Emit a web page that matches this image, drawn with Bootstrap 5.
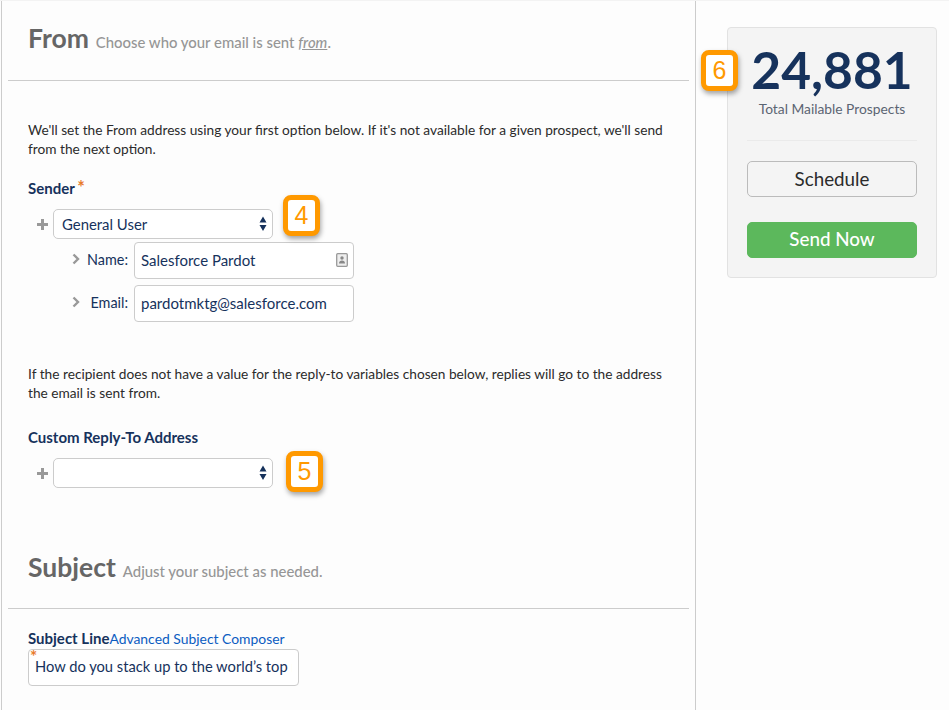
<!DOCTYPE html>
<html lang="en"><head><meta charset="utf-8"><title>From</title>
<link href="https://cdn.jsdelivr.net/npm/bootstrap@5.3.0/dist/css/bootstrap.min.css" rel="stylesheet">
<style>
html,body{height:710px;overflow:hidden}
body{background:#fdfdfd;font-family:Lato,"Liberation Sans",sans-serif;font-size:13.5px;color:#16325c}
.shell{height:710px;border-top:1px solid #f3f3f3;position:relative}
.mainpane{width:695px;height:709px;margin-left:1px;border-left:1px solid #ccc;border-right:1px solid #ccc;padding:0 6px;flex:none;overflow:hidden}
.sidepane{flex:1;padding:26px 11px 0 31px}
.sect-head{margin:0;padding:0 0 0 20px;font-size:14.9px;color:#969696;display:flex;align-items:baseline;gap:7px}
.sect-head b{font-size:26.5px;color:#666;font-weight:700;line-height:32px}
.sect-head u{font-style:italic}
.from-head{padding-top:21px;height:79px}
.subj-head{margin-top:60px;height:60px;padding-top:3px}
.rule{border-top:1px solid #ccc;width:681px}
.copy{margin:0 0 0 20px;width:645px;color:#2b2b2b;line-height:19px;font-size:13.7px}
.copy-a{margin-top:39px}
.copy-b{margin-top:42px}
.lbl{font-weight:700;color:#16325c;font-size:15px;line-height:17px;margin-left:20px}
.lbl i{color:#e87b2b;font-style:normal;font-size:18px;line-height:0;margin-left:-1px}
.lbl-a{margin-top:22px}
.lbl-b{margin-top:27px}
.plus{width:25px;text-align:right;padding-right:5px;flex:none;line-height:0}
.pick{width:220px;height:30px;padding:0 24px 0 8px;border:1px solid #ccc;border-radius:5px;font-size:14.9px;color:#16325c;background-color:#fff;background-size:12px 20px;background-position:right 3px center;background-image:url("data:image/svg+xml,%3Csvg xmlns='http://www.w3.org/2000/svg' viewBox='0 0 12 20'%3E%3Cpath fill='%2316325c' d='M6 2.500 9.500 8.500h-7zM2.500 11h7L6 17z'/%3E%3C/svg%3E")}
.rowline{margin-left:20px;margin-top:12px;display:flex;align-items:center}
.subrow{margin-left:64px;display:flex;align-items:center;height:37px}
.sr-a{margin-top:3px}
.sr-b{margin-top:6px}
.subrow .tag{width:56px;display:flex;align-items:center;justify-content:space-between;font-size:14.4px;color:#16325c;flex:none;margin-right:6px;padding-bottom:2px}
.fld{width:220px;height:37px;padding:0 6px 2px;border:1px solid #ccc;border-radius:4px;font-size:15px;color:#16325c;background-color:#fff}
.fldwrap{position:relative}
.fldwrap svg{position:absolute;right:6px;top:11px}
.panel-box{background:#f4f4f4;border:1px solid #e2e2e2;border-radius:4px;height:251px;width:210px;padding:13px 19px 0;text-align:center}
.bignum{font-size:51.500px;font-weight:700;color:#16325c;line-height:56px;letter-spacing:0}
.numlbl{color:#5b6472;font-size:13.800px;line-height:20px;margin-top:2px}
.panel-rule{border-top:1px solid #eaeaea;margin:21px 0 20px}
.btn-sched,.btn-send{display:block;width:170px;font-size:18.800px;border-radius:5px}
.btn-sched{height:36px;padding:0;background:#f4f4f4;border:1px solid #bbb;color:#2b2b2b;margin-bottom:25px}
.btn-send{height:36px;padding:0 0 1px;background:#5cb85c;border:1px solid #5cb85c;color:#fff;font-weight:500}
.note{position:absolute;width:37px;height:41px;border:5px solid #f90;border-radius:8px;background:#fff;color:#f90;font-size:25px;font-family:"Liberation Sans",sans-serif;display:flex;align-items:center;justify-content:center;box-shadow:1px 3px 5px rgba(0,0,0,.35)}
.n4{left:283px;top:194px}.n5{left:286px;top:450px}.n6{left:701px;top:49px}
.reqmark{position:absolute;left:2px;top:1px;color:#e87b2b;font-weight:700;font-size:17px;line-height:14px}
.subj-field{margin-left:20px;margin-top:2px;position:relative;width:271px}
.subj-field .fld{width:271px;padding:0 6px 3px;overflow:hidden;font-size:14.7px}
.sublabel{display:flex;margin:21px 0 0 20px;line-height:17px;font-size:15px}
.sublabel b{color:#16325c}
.sublabel a{color:#0b5cc1;text-decoration:none;font-size:13.9px}
</style></head>
<body>
<div class="shell d-flex">
  <div class="mainpane">
    <h2 class="sect-head from-head"><b>From</b><span>Choose who your email is sent <u>from</u>.</span></h2>
    <div class="rule"></div>
    <p class="copy copy-a">We'll set the From address using your first option below. If it's not available for a given prospect, we'll send from the next option.</p>
    <div class="lbl lbl-a">Sender <i>*</i></div>
    <div class="rowline">
      <span class="plus"><svg width="11" height="11" viewBox="0 0 11 11"><path fill="#999" d="M4 0h3v4h4v3H7v4H4V7H0V4h4z"/></svg></span>
      <select class="form-select pick"><option>General User</option></select>
    </div>
    <div class="subrow sr-a">
      <span class="tag"><svg width="8" height="12" viewBox="0 0 8 12"><path fill="none" stroke="#999" stroke-width="2.400" d="M1.500 1.500 6 6l-4.500 4.500"/></svg>Name:</span>
      <div class="fldwrap"><input class="form-control fld" value="Salesforce Pardot"><svg width="12" height="14" viewBox="0 0 12 14"><rect x=".7" y=".7" width="10.600" height="12.600" rx="1" fill="#eee" stroke="#999" stroke-width="1.300"/><circle cx="6" cy="5" r="1.700" fill="#888"/><path fill="#888" d="M3 10.500c0-2 1.200-3 3-3s3 1 3 3z"/></svg></div>
    </div>
    <div class="subrow sr-b">
      <span class="tag"><svg width="8" height="12" viewBox="0 0 8 12"><path fill="none" stroke="#999" stroke-width="2.400" d="M1.500 1.500 6 6l-4.500 4.500"/></svg>Email:</span>
      <input class="form-control fld" value="pardotmktg@salesforce.com">
    </div>
    <p class="copy copy-b">If the recipient does not have a value for the reply-to variables chosen below, replies will go to the address the email is sent from.</p>
    <div class="lbl lbl-b">Custom Reply-To Address</div>
    <div class="rowline">
      <span class="plus"><svg width="11" height="11" viewBox="0 0 11 11"><path fill="#999" d="M4 0h3v4h4v3H7v4H4V7H0V4h4z"/></svg></span>
      <select class="form-select pick"><option></option></select>
    </div>
    <h2 class="sect-head subj-head"><b>Subject</b><span>Adjust your subject as needed.</span></h2>
    <div class="rule"></div>
    <div class="sublabel"><b>Subject Line</b><a href="#">Advanced Subject Composer</a></div>
    <div class="subj-field"><input class="form-control fld" value="How do you stack up to the world’s top marketers?"><span class="reqmark">*</span></div>
  </div>
  <div class="sidepane">
    <div class="panel-box">
      <div class="bignum">24,881</div>
      <div class="numlbl">Total Mailable Prospects</div>
      <div class="panel-rule"></div>
      <button class="btn btn-sched">Schedule</button>
      <button class="btn btn-send">Send Now</button>
    </div>
  </div>
  <div class="note n4">4</div><div class="note n5">5</div><div class="note n6">6</div>
</div>
<script src="https://cdn.jsdelivr.net/npm/bootstrap@5.3.0/dist/js/bootstrap.bundle.min.js"></script>
</body></html>
